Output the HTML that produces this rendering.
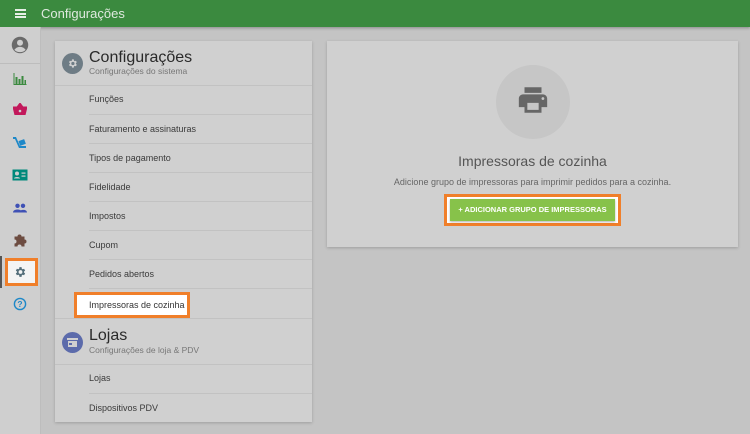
<!DOCTYPE html>
<html><head><meta charset="utf-8"><style>
*{margin:0;padding:0;box-sizing:border-box}
body{width:750px;height:434px;background:#c4c4c4;font-family:"Liberation Sans",sans-serif;position:relative;overflow:hidden;color:#333}
.hdr{position:absolute;left:0;top:0;width:750px;height:27px;background:#3b8a3f;color:#dfe9df;box-shadow:0 1px 3px rgba(0,0,0,.3)}
.hdr .t{position:absolute;left:41px;top:6px;font-size:13px}
.hdr .m{position:absolute;left:15px;top:9px;width:11px;height:9px;border-top:2px solid #e6efe6;border-bottom:2px solid #e6efe6}
.hdr .m:after{content:"";position:absolute;left:0;top:1.5px;width:11px;height:2px;background:#e6efe6}
.side{position:absolute;left:0;top:27px;width:41px;height:407px;background:#cfcfcf;border-right:1px solid #bdbdbd}
.ic{position:absolute;left:20px;transform:translate(-50%,-50%)}
.card{position:absolute;background:#d0d0d0;box-shadow:0 1px 3px rgba(0,0,0,.2)}
.it{position:absolute;left:34px;right:0;height:29px;border-top:1px solid #c2c2c2;font-size:9px;color:#3a3a3a;padding-left:0;line-height:29px}
.sec{position:absolute;left:0;right:0;border-top:1px solid #c2c2c2}
.circ{position:absolute;width:21px;height:21px;border-radius:50%}
.tt{position:absolute;left:34px;font-size:16px;color:#2a2a2a}
.st{position:absolute;left:34px;font-size:8.5px;color:#777}
</style></head><body>
<div class="hdr"><div class="m"></div><div class="t">Configurações</div></div>
<div class="side">
 <svg class="ic" style="top:18px" width="18" height="18" viewBox="0 0 24 24"><circle cx="12" cy="12" r="11" fill="#6a6a6a"/><circle cx="12" cy="9" r="4" fill="#cfcfcf"/><path d="M4.5 18.5c2-3 5-4 7.5-4s5.5 1 7.5 4c-2 2-4.5 3-7.5 3s-5.5-1-7.5-3z" fill="#cfcfcf"/></svg>
 <div style="position:absolute;left:0;top:36px;width:41px;border-top:1px solid #bdbdbd"></div>
 <svg class="ic" style="top:52px" width="13" height="12" viewBox="0 0 13 12"><path d="M0 0v12h13v-1H1V0z M2 4h2v7H2z M5 6h2v5H5z M8 3h2v8H8z M11 7h1.5v4H11z" fill="#3b8a3f"/></svg>
 <svg class="ic" style="top:82px" width="14" height="12" viewBox="0 0 14 12"><path d="M0 4h14l-2 8H2z M4 4l3-4 3 4" fill="#c2185b" stroke="#c2185b"/><circle cx="7" cy="8" r="1.3" fill="#cfcfcf"/></svg>
 <svg class="ic" style="top:116px" width="14" height="14" viewBox="0 0 14 14"><path d="M0 1h3l4 9h6v2H6L2 3H0z" fill="#1e88c8"/><rect x="6" y="4" width="6" height="5" fill="#1e88c8" transform="rotate(-20 9 6)"/></svg>
 <svg class="ic" style="top:148px" width="15" height="11" viewBox="0 0 15 11"><rect width="15" height="11" fill="#00897b"/><circle cx="4.5" cy="4" r="2" fill="#cfcfcf"/><path d="M1.5 9c0-2 6-2 6 0z" fill="#cfcfcf"/><rect x="9" y="3" width="4" height="1.2" fill="#cfcfcf"/><rect x="9" y="6" width="4" height="1.2" fill="#cfcfcf"/></svg>
 <svg class="ic" style="top:181px" width="14" height="9" viewBox="0 0 14 9"><circle cx="4.5" cy="2.3" r="2.2" fill="#3f51b5"/><circle cx="10" cy="2.3" r="2.2" fill="#3f51b5"/><path d="M0 9c0-4 9-4 9 0zM6 9c0-3 8-4 8 0z" fill="#3f51b5"/></svg>
 <svg class="ic" style="top:213px" width="13" height="13" viewBox="0 0 13 13"><path d="M1 3h3a2 2 0 1 1 4 0h3v3a2 2 0 1 1 0 4v3H8a2 2 0 1 0-4 0H1v-3a2 2 0 1 0 0-4z" fill="#6d4c41"/></svg>
 <div style="position:absolute;left:0;top:229px;width:2px;height:32px;background:#555"></div>
 <div style="position:absolute;left:5px;top:231px;width:33px;height:28px;border:3px solid #f07f2a;background:#f4f4f4"></div>
 <svg class="ic" style="top:245px" width="13" height="13" viewBox="0 0 24 24"><path fill="#546e7a" d="M19.4 13a7.5 7.5 0 0 0 0-2l2.1-1.6-2-3.5-2.5 1a7 7 0 0 0-1.7-1L14.9 3h-4l-.4 2.9a7 7 0 0 0-1.7 1l-2.5-1-2 3.5L6.4 11a7.5 7.5 0 0 0 0 2l-2.1 1.6 2 3.5 2.5-1a7 7 0 0 0 1.7 1l.4 2.9h4l.4-2.9a7 7 0 0 0 1.7-1l2.5 1 2-3.5zM12.9 15.5a3.5 3.5 0 1 1 0-7 3.5 3.5 0 0 1 0 7z"/></svg>
 <svg class="ic" style="top:277px" width="13" height="13" viewBox="0 0 13 13"><circle cx="6.5" cy="6.5" r="5.6" fill="none" stroke="#1e88c8" stroke-width="1.4"/><text x="6.5" y="9.6" font-size="8.5" font-weight="bold" text-anchor="middle" fill="#1e88c8" font-family="Liberation Sans">?</text></svg>
</div>

<div class="card" style="left:55px;top:41px;width:257px;height:381px">
 <div class="circ" style="left:7px;top:12px;background:#6e7c85"></div>
 <svg style="position:absolute;left:12px;top:17px" width="11" height="11" viewBox="0 0 24 24"><path fill="#d0d0d0" d="M19.4 13a7.5 7.5 0 0 0 0-2l2.1-1.6-2-3.5-2.5 1a7 7 0 0 0-1.7-1L14.9 3h-4l-.4 2.9a7 7 0 0 0-1.7 1l-2.5-1-2 3.5L6.4 11a7.5 7.5 0 0 0 0 2l-2.1 1.6 2 3.5 2.5-1a7 7 0 0 0 1.7 1l.4 2.9h4l.4-2.9a7 7 0 0 0 1.7-1l2.5 1 2-3.5zM12.9 15.5a3.5 3.5 0 1 1 0-7 3.5 3.5 0 0 1 0 7z"/></svg>
 <div class="tt" style="top:8px">Configurações</div>
 <div class="st" style="top:25px">Configurações do sistema</div>
 <div class="sec" style="top:44px"></div>
 <div class="it" style="top:44px;border-top:none">Funções</div>
 <div class="it" style="top:73px">Faturamento e assinaturas</div>
 <div class="it" style="top:102px">Tipos de pagamento</div>
 <div class="it" style="top:131px">Fidelidade</div>
 <div class="it" style="top:160px">Impostos</div>
 <div class="it" style="top:189px">Cupom</div>
 <div class="it" style="top:218px">Pedidos abertos</div>
 <div class="it" style="top:247px">Impressoras de cozinha</div>
 <div style="position:absolute;left:19px;top:251px;width:116px;height:26px;border:3px solid #f07f2a;background:#fff;font-size:9px;line-height:20px;padding-left:12px;color:#333">Impressoras de cozinha</div>
 <div class="sec" style="top:277px"></div>
 <div class="circ" style="left:7px;top:291px;background:#5c6bab"></div>
 <svg style="position:absolute;left:12px;top:297px" width="11" height="10" viewBox="0 0 11 10"><rect x="0" y="0" width="11" height="2" fill="#d0d0d0"/><rect x="1" y="3" width="9" height="6" fill="#d0d0d0"/><rect x="2" y="5" width="3" height="2" fill="#5c6bab"/></svg>
 <div class="tt" style="top:286px">Lojas</div>
 <div class="st" style="top:304px">Configurações de loja &amp; PDV</div>
 <div class="sec" style="top:323px"></div>
 <div class="it" style="top:323px;border-top:none">Lojas</div>
 <div class="it" style="top:352px">Dispositivos PDV</div>
</div>

<div class="card" style="left:327px;top:41px;width:411px;height:206px">
 <div style="position:absolute;left:169px;top:24px;width:74px;height:74px;border-radius:50%;background:#c6c6c6"></div>
 <svg style="position:absolute;left:189px;top:42px" width="34" height="34" viewBox="0 0 24 24"><path fill="#666" d="M19 8H5c-1.66 0-3 1.34-3 3v6h4v4h12v-4h4v-6c0-1.66-1.34-3-3-3zm-3 11H8v-5h8v5zm3-7c-.55 0-1-.45-1-1s.45-1 1-1 1 .45 1 1-.45 1-1 1zm-1-9H6v4h12V3z"/></svg>
 <div style="position:absolute;left:0;right:0;top:112px;text-align:center;font-size:14px;color:#555">Impressoras de cozinha</div>
 <div style="position:absolute;left:0;right:0;top:136px;text-align:center;font-size:9px;color:#666">Adicione grupo de impressoras para imprimir pedidos para a cozinha.</div>
 <div style="position:absolute;left:117px;top:153px;width:177px;height:32px;border:3px solid #f07f2a;background:#fff"></div>
 <div style="position:absolute;left:123px;top:158px;width:165px;height:22px;background:#87c24a;color:#fff;font-size:7.5px;font-weight:bold;text-align:center;line-height:22px;box-shadow:0 1px 2px rgba(0,0,0,.3)">+ ADICIONAR GRUPO DE IMPRESSORAS</div>
</div>
</body></html>
